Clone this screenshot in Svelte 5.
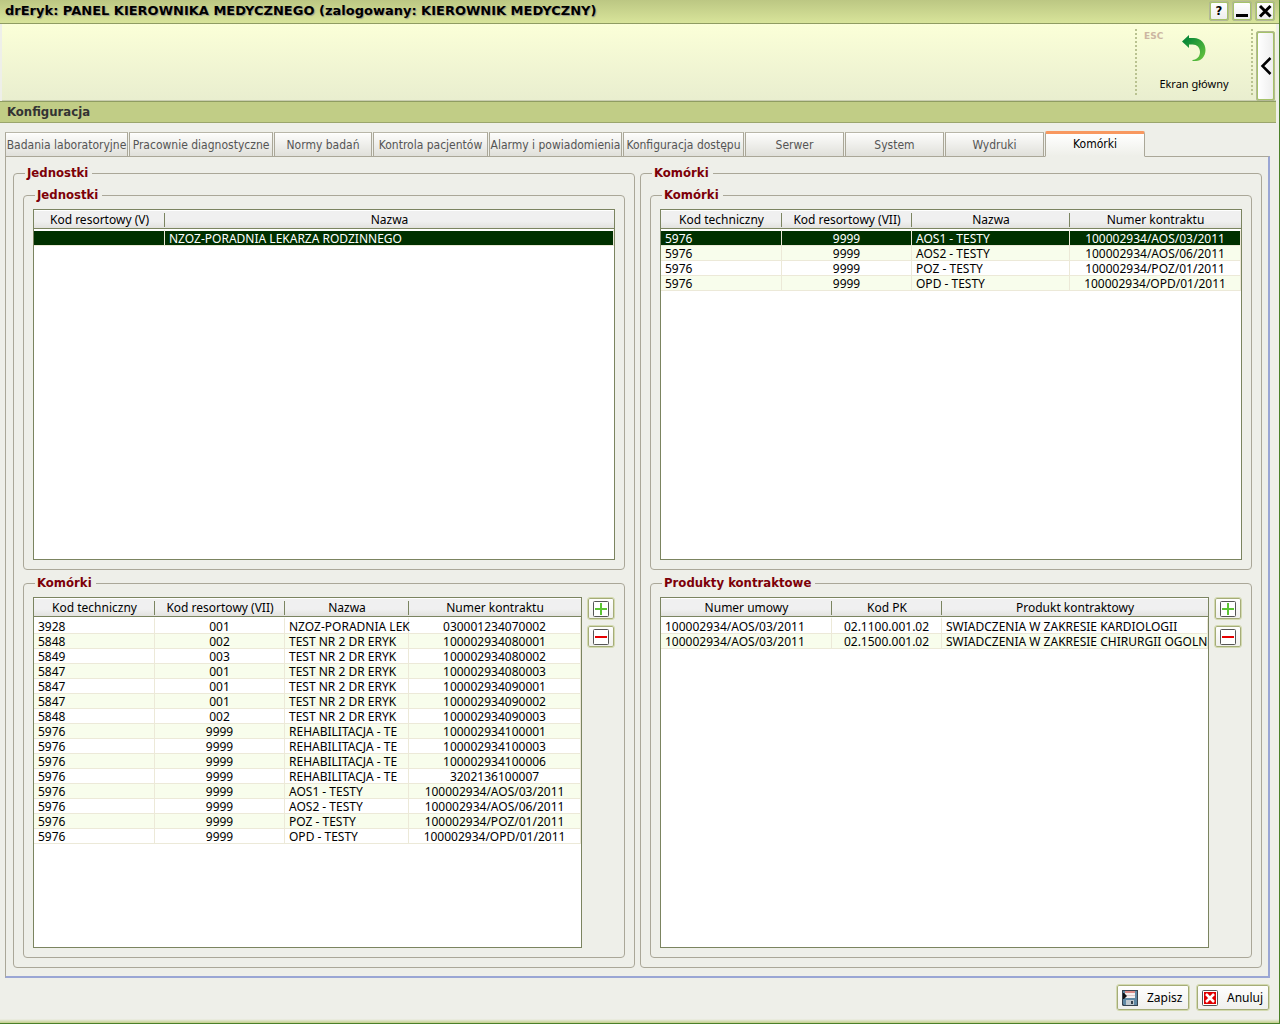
<script>
  const tabs = [
    'Badania laboratoryjne', 'Pracownie diagnostyczne', 'Normy badań', 'Kontrola pacjentów',
    'Alarmy i powiadomienia', 'Konfiguracja dostępu', 'Serwer', 'System', 'Wydruki', 'Komórki'
  ];
  let active = $state('Komórki');

  const units = {
    cols: [{ t: 'Kod resortowy (V)', w: 131, c: true }, { t: 'Nazwa' }],
    rows: [['', 'NZOZ-PORADNIA LEKARZA RODZINNEGO']],
    selected: 0
  };
  const cellCols = (nameWidth) => [
    { t: 'Kod techniczny', w: 121 },
    { t: 'Kod resortowy (VII)', w: 130, c: true },
    { t: 'Nazwa', w: nameWidth },
    { t: 'Numer kontraktu', c: true }
  ];
  const contracts = [
    ['5976', '9999', 'AOS1 - TESTY', '100002934/AOS/03/2011'],
    ['5976', '9999', 'AOS2 - TESTY', '100002934/AOS/06/2011'],
    ['5976', '9999', 'POZ - TESTY', '100002934/POZ/01/2011'],
    ['5976', '9999', 'OPD - TESTY', '100002934/OPD/01/2011']
  ];
  const cells = { cols: cellCols(158), rows: contracts, selected: 0 };
  const unitCells = {
    cols: cellCols(124),
    rows: [
      ['3928', '001', 'NZOZ-PORADNIA LEK', '030001234070002'],
      ['5848', '002', 'TEST NR 2 DR ERYK', '100002934080001'],
      ['5849', '003', 'TEST NR 2 DR ERYK', '100002934080002'],
      ['5847', '001', 'TEST NR 2 DR ERYK', '100002934080003'],
      ['5847', '001', 'TEST NR 2 DR ERYK', '100002934090001'],
      ['5847', '001', 'TEST NR 2 DR ERYK', '100002934090002'],
      ['5848', '002', 'TEST NR 2 DR ERYK', '100002934090003'],
      ['5976', '9999', 'REHABILITACJA - TE', '100002934100001'],
      ['5976', '9999', 'REHABILITACJA - TE', '100002934100003'],
      ['5976', '9999', 'REHABILITACJA - TE', '100002934100006'],
      ['5976', '9999', 'REHABILITACJA - TE', '3202136100007'],
      ...contracts
    ],
    selected: -1
  };
  const products = {
    cols: [{ t: 'Numer umowy', w: 171 }, { t: 'Kod PK', w: 110, c: true }, { t: 'Produkt kontraktowy' }],
    rows: [
      ['100002934/AOS/03/2011', '02.1100.001.02', 'SWIADCZENIA W ZAKRESIE KARDIOLOGII'],
      ['100002934/AOS/03/2011', '02.1500.001.02', 'SWIADCZENIA W ZAKRESIE CHIRURGII OGOLN']
    ],
    selected: -1
  };
</script>

{#snippet grid(g, label)}
  <div class="grid">
    <table aria-label={label}>
      <colgroup>
        {#each g.cols as col}<col style:width={col.w ? col.w + 'px' : 'auto'} />{/each}
      </colgroup>
      <thead>
        <tr>{#each g.cols as col}<th scope="col">{col.t}</th>{/each}</tr>
      </thead>
      <tbody>
        {#each g.rows as row, i}
          <tr class:selected={i === g.selected}>
            {#each row as value, j}<td class:center={g.cols[j].c}><span>{value}</span></td>{/each}
          </tr>
        {/each}
      </tbody>
    </table>
  </div>
{/snippet}

{#snippet tools()}
  <div class="tools">
    <button class="tool" aria-label="Dodaj">
      <svg width="16" height="16" viewBox="0 0 16 16"><rect x=".5" y=".5" width="15" height="15" rx="1" fill="#fff" stroke="#555" /><path d="M2 8h12M8 2v12" stroke="#5cc434" stroke-width="2" /></svg>
    </button>
    <button class="tool" aria-label="Usuń">
      <svg width="16" height="16" viewBox="0 0 16 16"><rect x=".5" y=".5" width="15" height="15" rx="1" fill="#fff" stroke="#555" /><path d="M2 8h12" stroke="#e60000" stroke-width="2" /></svg>
    </button>
  </div>
{/snippet}

<div class="window">
  <header class="titlebar">
    <h1>drEryk: PANEL KIEROWNIKA MEDYCZNEGO (zalogowany: KIEROWNIK MEDYCZNY)</h1>
    <button class="win" aria-label="Pomoc">?</button>
    <button class="win" aria-label="Minimalizuj">
      <svg width="14" height="14" viewBox="0 0 14 14"><path d="M1 11.500h12" stroke="#000" stroke-width="3" /></svg>
    </button>
    <button class="win" aria-label="Zamknij">
      <svg width="14" height="14" viewBox="0 0 14 14"><path d="M2 2l10.500 10.500M12.500 2L2 12.500" stroke="#000" stroke-width="3" /></svg>
    </button>
  </header>

  <div class="body">
    <div class="ribbon">
      <button class="home">
        <kbd>ESC</kbd>
        <svg width="26" height="28" viewBox="0 0 26 28">
          <defs><linearGradient id="arrow" x1="0" y1="0" x2="1" y2="1"><stop offset=".2" stop-color="#0c8a38" /><stop offset="1" stop-color="#6cc83c" /></linearGradient></defs>
          <path fill="url(#arrow)" d="M1 7.500L8 1v3h5c6.500 0 11.500 5 11.500 12 0 6.500-4.500 11-9.500 11h-3.500v-1c4.500-.5 7.500-3.500 7.500-8 0-4.500-3-7.500-7.500-7.500H8V14z" />
        </svg>
        <span>Ekran główny</span>
      </button>
      <button class="collapse" aria-label="Zwiń">
        <svg width="12" height="18" viewBox="0 0 12 18"><path d="M10.500 1L2.500 9l8 8" fill="none" stroke="#000" stroke-width="2.500" /></svg>
      </button>
    </div>
    <h2>Konfiguracja</h2>

    <main>
      <div class="tabs" role="tablist">
        {#each tabs as tab}
          <button role="tab" aria-selected={tab === active} onclick={() => (active = tab)}>{tab}</button>
        {/each}
      </div>
      <div class="panel" role="tabpanel">
        <fieldset>
          <legend>Jednostki</legend>
          <div class="stack">
            <fieldset>
              <legend>Jednostki</legend>
              <div class="line">{@render grid(units, 'Jednostki')}</div>
            </fieldset>
            <fieldset>
              <legend>Komórki</legend>
              <div class="line">{@render grid(unitCells, 'Komórki jednostki')}{@render tools()}</div>
            </fieldset>
          </div>
        </fieldset>
        <fieldset>
          <legend>Komórki</legend>
          <div class="stack">
            <fieldset>
              <legend>Komórki</legend>
              <div class="line">{@render grid(cells, 'Komórki')}</div>
            </fieldset>
            <fieldset>
              <legend>Produkty kontraktowe</legend>
              <div class="line">{@render grid(products, 'Produkty kontraktowe')}{@render tools()}</div>
            </fieldset>
          </div>
        </fieldset>
      </div>
    </main>

    <footer>
      <button class="action">
        <svg width="16" height="16" viewBox="0 0 16 16"><path d="M0 0h16v16H1l-1-1z" fill="#36424e" /><path d="M1 1h14v14H2l-1-1z" fill="#5f88a4" /><path d="M3 1h10v7H3z" fill="#f6f0f0" /><path d="M3 1h10v2H3z" fill="#dc8c88" /><path d="M3 5h10v1H3z" fill="#dccaca" /><path d="M1 3h1l3 3-3 3H1z" fill="#111" /><path d="M4 10h8v5H4z" fill="#c0c8ce" /><path d="M9 11h2v3H9z" fill="#34404c" /></svg>
        <span>Zapisz</span>
      </button>
      <button class="action">
        <svg width="16" height="16" viewBox="0 0 16 16"><rect x=".5" y=".5" width="15" height="15" rx="1" fill="#fff" stroke="#555" /><path d="M2 2h12v12H2z" fill="#e00000" /><path d="M4 4l8 8M12 4l-8 8" stroke="#fff" stroke-width="2.500" /></svg>
        <span>Anuluj</span>
      </button>
    </footer>
  </div>
</div>

<style>
  :global(body) { background: #eeefe9; }
  .window, .window :global(*) { box-sizing: border-box; }
  .window {
    display: flex;
    flex-direction: column;
    min-height: 100vh;
    border-right: 1px solid #4a8028;
    border-bottom: 1px solid #4a8028;
    background: linear-gradient(to top, #c3cf8c, #eeefe9 4px);
    font: 12px/14px "Noto Sans", sans-serif;
    color: #000;
  }
  button { font: inherit; color: inherit; padding: 0; cursor: pointer; }
  svg { display: block; }

  .titlebar {
    display: flex;
    align-items: center;
    gap: 3px;
    height: 24px;
    padding: 0 4px 1px 5px;
    border-bottom: 1px solid #8f9c62;
    background: linear-gradient(#bcc783, #d8e49a);
  }
  h1 { flex: 1; margin: 0; font: bold 13px/20px "DejaVu Sans", sans-serif; text-shadow: 1px 1px 1px #9a9a8a; white-space: nowrap; }
  .win {
    display: grid;
    place-items: center;
    width: 20px;
    height: 20px;
    border: 2px solid #a5c268;
    border-radius: 3px;
    outline: 1px solid #b3b897;
    background: linear-gradient(#fff, #eee);
    outline-offset: -1px;
    font: bold 13px/16px "DejaVu Sans Condensed", sans-serif;
  }

  .body { flex: 1; display: flex; flex-direction: column; padding-right: 3px; }
  .ribbon {
    display: flex;
    justify-content: flex-end;
    gap: 3px;
    height: 77px;
    margin-left: 2px;
    padding: 5px 1px 0 0;
    border-bottom: 1px solid #c9cdb0;
    background: linear-gradient(#fbffd8, #e9eecf);
  }
  .home {
    display: grid;
    grid-template-rows: 28px 1fr;
    justify-items: center;
    align-items: center;
    position: relative;
    width: 118px;
    height: 66px;
    padding: 5px 0 4px;
    border: 0 dotted #b9c290;
    border-width: 0 2px;
    background: none;
    font-size: 11px;
  }
  .home span { align-self: end; }
  .home kbd { position: absolute; left: 7px; top: 0; font: bold 9px/14px "DejaVu Sans", sans-serif; color: #ccb6a2; }
  .collapse {
    display: grid;
    place-items: center;
    width: 19px;
    height: 70px;
    margin-top: 2px;
    border: 2px solid #a5c268;
    border-radius: 3px;
    outline: 1px solid #b3b897;
    outline-offset: -1px;
    background: linear-gradient(90deg, #fff, #eee);
  }
  h2 {
    margin: 0;
    height: 22px;
    padding: 0 7px;
    border-top: 1px solid #8f9c62;
    border-bottom: 1px solid #9aa56c;
    background: #c1cd86;
    font: bold 13px/20px "DejaVu Sans Condensed", sans-serif;
    color: #333;
  }

  main { flex: 1; display: flex; flex-direction: column; padding: 8px 6px 0 5px; }
  .tabs {
    display: grid;
    grid-template-columns: 124px 145px 99px 116px 134px 122px 100px 100px 100px 100px;
    align-items: end;
    margin-bottom: -1px;
    font-family: "DejaVu Sans Condensed", sans-serif;
  }
  .tabs button {
    height: 25px;
    margin-right: 1px;
    border: 1px solid #aaa798;
    border-top-color: #b8b6a8;
    box-shadow: inset 0 1px #fff;
    background: linear-gradient(#fdfdfc, #e0e0da);
    color: #555;
    white-space: nowrap;
  }
  .tabs button[aria-selected='true'] {
    position: relative;
    height: 26px;
    margin-right: 0;
    padding-bottom: 3px;
    border-top: 3px solid #f89860;
    border-bottom-color: #eeefe9;
    border-radius: 2px 2px 0 0;
    box-shadow: none;
    background: linear-gradient(#fff, #eeefe9);
    color: #000;
  }
  .panel {
    flex: 1;
    display: grid;
    grid-template-columns: 1fr 1fr;
    gap: 5px;
    padding: 8px 6px 8px 7px;
    border: 1px solid #aaa798;
    border-right: 2px solid #9aa6d4;
    border-bottom: 2px solid #9aa6d4;
  }
  fieldset {
    display: flex;
    flex-direction: column;
    min-width: 0;
    margin: 0;
    padding: 6px 9px 9px;
    border: 1px solid #aaa798;
    border-radius: 4px;
  }
  legend { margin-left: 2px; padding: 0 4px 0 2px; font: bold 13px/16px "DejaVu Sans Condensed", sans-serif; color: #7d0008; }
  .stack { flex: 1; display: grid; grid-template-rows: 1fr 1fr; gap: 5px; }
  .line { flex: 1; display: flex; gap: 5px; min-width: 0; }
  .grid { flex: 1; min-width: 0; border: 1px solid #7b8460; background: #fff; overflow: hidden; }
  table { width: 100%; table-layout: fixed; border-collapse: separate; border-spacing: 0; }
  th {
    height: 19px;
    padding: 0;
    border-top: 1px solid #fff;
    border-bottom: 1px solid #7b8460;
    background: linear-gradient(#7b8460, #7b8460) right 2px / 1px 14px no-repeat, linear-gradient(#f0f0f0 60%, #e2e2de);
    font-weight: normal;
  }
  th:last-child { background: linear-gradient(#f0f0f0 60%, #e2e2de); }
  td { height: 15px; padding: 0 4px; border-right: 1px solid #ece9d8; border-bottom: 1px solid #ece9d8; }
  td span { display: block; height: 14px; line-height: 16px; white-space: nowrap; }
  tbody tr:first-child td { height: 17px; border-top: 2px solid #fff; }
  tbody tr:nth-child(even) td { background: #f8fdec; }
  tbody tr.selected td { background: #003000; color: #fff; }
  .center { text-align: center; }

  .tools { display: flex; flex-direction: column; gap: 5px; }
  .tool, .action {
    border: 1px solid #d3dab0;
    border-radius: 3px;
    box-shadow: inset 0 0 0 1px #a5ac78;
    background: linear-gradient(#fff, #efefec);
  }
  .tool { display: grid; place-items: center; width: 28px; height: 23px; }
  footer { display: flex; justify-content: flex-end; gap: 6px; padding: 6px 6px 12px; }
  .action { display: flex; align-items: center; gap: 9px; width: 74px; height: 27px; padding: 0 5px; }
</style>
